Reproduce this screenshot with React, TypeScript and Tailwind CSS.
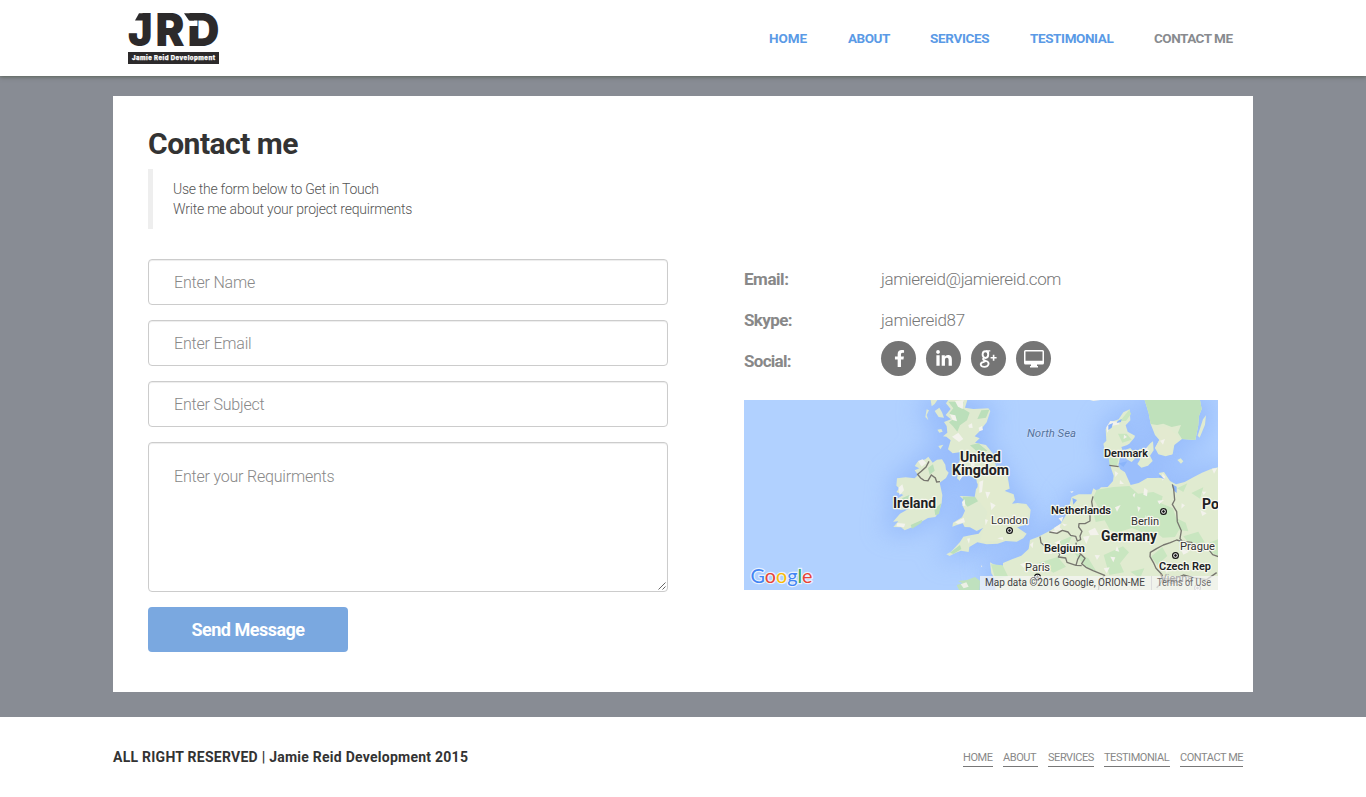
import React from "react";
import { FaFacebookF, FaLinkedinIn } from "react-icons/fa";

const navItems = [
  { label: "HOME", cls: "w-[39px] text-[#5a9ae6] tracking-[-0.05px]" },
  { label: "ABOUT", cls: "w-[42px] text-[#5a9ae6] tracking-[-0.5px]" },
  { label: "SERVICES", cls: "w-[60px] text-[#5a9ae6] tracking-[-0.33px]" },
  { label: "TESTIMONIAL", cls: "w-[84px] text-[#5a9ae6] tracking-[-0.39px]" },
  { label: "CONTACT ME", cls: "w-[79px] text-[#888b8f] tracking-[-0.5px]" },
];

const footerItems = [
  { label: "HOME", cls: "w-[30px]" },
  { label: "ABOUT", cls: "w-[35px]" },
  { label: "SERVICES", cls: "w-[46px]" },
  { label: "TESTIMONIAL", cls: "w-[66px]" },
  { label: "CONTACT ME", cls: "w-[63px]" },
];

function Logo() {
  return (
    <svg width="92" height="54" viewBox="0 0 92 54" className="block overflow-visible" fill="#2c2a2b">
      <g fontFamily="Inter, sans-serif" fontWeight="900" fontSize="45">
        <text x="0" y="33" textLength="24.5" lengthAdjust="spacingAndGlyphs">J</text>
        <text x="27.5" y="33" textLength="29" lengthAdjust="spacingAndGlyphs">R</text>
        <text x="59.5" y="33" textLength="32" lengthAdjust="spacingAndGlyphs">D</text>
      </g>
      <polygon points="11,0.3 16,0.3 16,7.5 7,7.5" />
      <rect x="60" y="7.5" width="9.5" height="5.5" fill="#fff" />
      <polygon points="56,0.3 66,0.3 66,7.5 61,7.5" />
      <rect x="0" y="39" width="91" height="12" />
      <text x="4" y="47.2" fill="#fff" stroke="#fff" strokeWidth="0.25" fontFamily="Inter, sans-serif" fontWeight="800" fontSize="6" textLength="83">
        Jamie Reid Development
      </text>
    </svg>
  );
}

function City({ x, y, light = false }: { x: number; y: number; light?: boolean }) {
  return (
    <g stroke={light ? "#999" : "#111"} fill="#fff">
      <circle cx={x} cy={y} r="2.9" strokeWidth="1.2" />
      <circle cx={x} cy={y} r="1" fill={light ? "#999" : "#111"} strokeWidth="0.8" />
    </g>
  );
}

function Label({ x, y, w, children }: { x: number; y: number; w: number; children: string }) {
  return (
    <text x={x} y={y} textLength={w} lengthAdjust="spacingAndGlyphs">
      {children}
    </text>
  );
}

function EuropeMap() {
  return (
    <svg width="474" height="190" viewBox="0 0 474 190" className="block" fontFamily="Roboto, sans-serif">
      <defs>
        <filter id="coast" x="-40%" y="-40%" width="180%" height="180%">
          <feGaussianBlur stdDeviation="36" />
        </filter>
        <clipPath id="frame">
          <rect width="474" height="190" />
        </clipPath>
        <g id="isles">
          <path d="M205 15L262 15L255 38L280 42L325 40L331 48L320 82L296 112L284 124L299 130L285 143L318 150L338 175L348 213L383 245L389 281L373 287L401 298L405 315L396 326L413 324L439 327L452 344L449 370L433 390L409 395L440 416L430 430L410 440L377 438L353 446L320 448L292 442L268 456L266 471L243 467L226 474L209 483L199 478L213 470L240 441L250 425L271 421L296 416L309 399L290 408L270 397L254 396L248 385L231 390L217 395L219 383L246 367L255 347L247 331L258 320L239 303L262 304L284 306L288 282L300 270L291 265L288 247L275 245L263 235L245 241L239 257L231 250L237 225L230 217L245 184L243 171L218 175L204 163L212 136L199 125L189 124L202 113L200 93L192 81L213 73L197 60L212 42L198 25Z" />
          <path d="M104 226L118 220L104 213L113 200L136 193L145 185L158 203L171 194L186 193L196 209L198 224L206 233L198 249L179 263L187 300L185 324L176 352L166 366L144 369L119 383L96 397L74 406L63 397L40 396L55 379L39 380L60 356L85 342L62 345L45 331L49 313L70 300L49 291L58 280L49 272L51 250L77 247L104 250L114 240Z" />
          <path d="M140 43L147 46L140 60L145 76L136 66ZM152 15L172 15L164 27L155 34ZM164 48L178 38L186 52L192 68L176 66ZM172 104L184 102L188 110L178 113ZM175 153L190 149L181 163Z" />
        </g>
        <g id="mainland">
          <path d="M720 215L695 221L666 233L640 247L614 261L588 268L570 258L552 231L536 234L545 248L525 249L502 249L476 264L452 270L443 250L435 232L421 223L415 212L419 192L430 172L424 156L440 151L448 146L463 128L465 122L443 110L437 91L451 76L449 43L430 52L416 73L391 82L377 102L379 137L370 146L374 165L386 188L394 222L401 242L399 258L383 276L363 277L352 288L340 280L334 298L296 298L275 306L269 328L258 360L242 386L210 407L175 425L150 435L146 462L124 482L96 493L69 504L69 515L40 508L30 502L34 535L47 555L45 600L720 600Z" />
          <path d="M494 15L660 15L665 42L657 63L655 90L646 135L606 132L583 150L578 178L557 184L535 178L525 159L538 135L525 120L512 87L506 55Z" />
          <path d="M669 73L678 61L675 89L659 128L653 122ZM592 195L602 190L610 199L603 206ZM434 166L451 159L462 172L464 192L455 201L439 192ZM478 161L494 164L511 145L519 139L521 166L510 182L518 198L504 212L484 218L472 207L480 194Z" />
        </g>
      </defs>
      <g clipPath="url(#frame)">
        <rect width="474" height="190" fill="#b1d1ff" />
        <g filter="url(#coast)" fill="#89b0f9" stroke="#89b0f9" strokeWidth="34" opacity="0.62" transform="translate(136 -5) scale(.33333)">
          <use href="#isles" />
        </g>
        <g filter="url(#coast)" fill="#89b0f9" stroke="#89b0f9" strokeWidth="34" opacity="0.62" transform="translate(236 -5) scale(.33333)">
          <use href="#mainland" />
        </g>
        <g transform="translate(136 -5) scale(.33333)">
          <use href="#isles" fill="#dfead0" />
          <path fill="#e2ebcf" d="M328 175L346 213L383 245L386 280L370 290L400 300L395 328L435 330L448 350L432 389L405 400L433 420L405 435L300 440L310 405L322 350L290 308L295 245Z" />
          <path fill="#bbdfba" d="M205 20L252 20L246 39L269 53L261 76L240 91L232 110L219 94L207 82L225 69L208 55L220 40ZM248 305L285 305L294 319L263 335L250 322ZM304 46L328 44L318 68L292 72ZM144 219L159 208L164 227L149 239ZM65 310L88 300L81 320L66 318ZM270 151L295 145L322 167L299 177ZM210 473L240 450L244 462L220 477ZM92 390L127 374L124 384L96 401ZM163 343L184 324L177 357L166 361Z" />
          <path fill="#f3f3ed" d="M225 18L251 15L248 42L234 35ZM210 58L226 61L231 79L218 75ZM216 125L235 113L250 132L237 141ZM296 98L306 93L309 105L298 109ZM265 90L276 85L278 99L267 98ZM272 198L282 192L284 216L273 213ZM298 260L310 256L306 291L298 294ZM316 290L331 292L322 311ZM331 322L347 331L334 345ZM246 321L254 313L256 332L248 332ZM225 382L251 368L255 382L234 387ZM315 373L324 375L317 391ZM114 198L128 193L139 204L125 215ZM55 278L67 268L72 286L59 301ZM52 384L76 386L72 397L49 394ZM261 431L270 430L267 446ZM380 382L396 385L390 394ZM352 430L368 426L370 435ZM238 257L244 235L250 241Z" />
          <path fill="none" stroke="#77766f" strokeWidth="4.2" d="M147 199L138 216L124 229L113 238L122 249L132 256L144 257L154 240L166 249L170 261L180 260" />
          <path fill="#bfe1be" d="M230 570L248 565L234 558L261 555L285 546L300 557L298 600L244 600Z" />
          <path fill="#eef0e7" d="M242 568L259 562L266 575L251 580ZM303 511L307 514L304 517Z" />
        </g>
        <g transform="translate(236 -5) scale(.33333)">
          <use href="#mainland" fill="#e0ebd0" />
          <path fill="#c9e6c0" d="M350 284L400 276L448 273L474 296L520 291L548 304L543 325L579 340L599 401L585 426L548 428L528 412L498 416L456 399L414 412L390 405L374 376L347 381L340 354L354 335L339 309ZM371 480L429 454L447 472L420 505L432 532L388 540ZM33 508L68 511L84 544L46 553ZM590 370L617 383L625 409L596 405ZM610 424L655 410L677 447L719 431L720 485L681 466L636 456ZM280 470L325 490L350 530L316 515ZM451 530L493 520L480 550ZM591 280L622 265L610 291ZM634 294L670 277L660 311ZM386 187L416 190L411 212L389 210ZM414 116L440 116L455 134L427 143ZM420 78L448 44L453 57L438 78ZM225 445L277 422L261 455ZM176 503L233 486L258 515L220 533ZM513 485L547 456L562 483L532 510Z" />
          <path fill="#bfe1bb" d="M494 15L660 15L665 42L657 63L655 90L646 135L606 132L594 113L603 90L575 96L550 86L531 90L512 87L506 55Z" />
          <path fill="#e3ead0" d="M534 99L559 93L580 110L599 131L578 153L574 180L545 178L525 159L538 135Z" />
          <path fill="#f3f2ec" d="M379 97L391 78L414 80L419 88L391 94L382 114ZM493 278L503 286L501 304L490 299ZM458 300L466 293L463 308ZM405 337L422 330L411 350ZM472 334L482 338L475 351ZM547 235L557 246L547 257ZM532 317L552 315L538 328ZM325 408L345 398L357 420L331 421ZM309 425L329 422L319 447ZM284 350L300 355L291 363ZM411 453L418 470L406 467ZM391 485L406 487L400 502ZM344 480L360 481L351 495ZM371 520L389 517L380 535ZM605 325L615 331L604 341ZM696 221L712 219L702 236ZM666 290L679 290L671 300ZM598 453L626 471L610 479ZM497 360L504 377L493 388ZM550 520L568 515L561 535ZM192 475L210 466L217 477ZM120 508L139 502L132 519ZM540 137L555 132L549 149ZM490 166L503 157L502 171ZM432 119L441 126L431 132ZM404 228L415 235L406 246ZM420 255L432 267L419 267ZM245 385L262 389L253 394ZM223 443L242 434L237 450ZM150 449L160 440L158 460ZM661 345L680 355L667 363Z" />
          <path fill="#8ab4fa" d="M385 90L399 84L395 98L385 105ZM413 78L425 72L423 81L410 84ZM277 309L291 315L280 329ZM540 239L553 253L537 246ZM576 268L590 275L590 294L580 286ZM416 205L442 199L430 216Z" />
          <path fill="#f2f3ed" d="M222 399L242 386L239 398L249 405L224 407ZM210 407L236 408L223 415ZM236 370L250 365L245 381ZM270 290L281 288L276 294ZM330 15L362 15L340 18Z" />
          <g fill="none" stroke="#77766f" strokeWidth="4" strokeLinejoin="round">
            <path d="M388 211L416 215M339 304L335 320L338 339L330 350L330 378L315 386L297 386L296 396L306 409L300 423L302 434L292 438L287 424L272 421L264 411L247 406L231 415L208 411M180 425L183 443L198 456L225 465L240 477L235 486L257 489L261 502L288 511L293 493L302 477L290 464L288 443M302 477L315 490L305 506L318 517L339 527L374 541L358 560L355 590M288 511L305 512M577 268L581 282L584 315L577 328L590 350L592 380L604 407L600 431L608 440L590 435L571 443L550 450L531 460L511 472L510 485L522 506L528 520L545 538L550 549L538 570L530 578M600 438L634 442L655 463L670 466L684 461L698 479L716 485M550 550L580 554L610 540L640 548L680 554L710 533M550 553L575 565L605 557" />
          </g>
        </g>
        <g fill="#202124" stroke="#f7f8ef" strokeWidth="2.4" strokeLinejoin="round" paintOrder="stroke" fontWeight="700">
          <g fontSize="14">
            <Label x={216} y={62} w={41}>United</Label>
            <Label x={208} y={75} w={57}>Kingdom</Label>
            <Label x={149} y={108} w={43}>Ireland</Label>
            <Label x={357} y={141} w={56}>Germany</Label>
            <text x="458" y="109">Po</text>
          </g>
          <g fontSize="11.5" fontWeight="600">
            <Label x={360} y={57} w={44}>Denmark</Label>
            <Label x={307} y={114} w={60}>Netherlands</Label>
            <Label x={300} y={152} w={41}>Belgium</Label>
            <Label x={415} y={170} w={52}>Czech Rep</Label>
          </g>
          <g fontSize="11.5" fontWeight="400" fill="#333">
            <Label x={247} y={124} w={37}>London</Label>
            <Label x={387} y={125} w={28}>Berlin</Label>
            <Label x={436} y={150} w={35}>Prague</Label>
            <Label x={281} y={171} w={25}>Paris</Label>
          </g>
        </g>
        <text x="283" y="37" fontSize="11.5" fontStyle="italic" fill="#53739f" stroke="#c5dafc" strokeWidth="1.5" paintOrder="stroke" textLength="49" lengthAdjust="spacingAndGlyphs">North Sea</text>
        <City x={265.5} y={130.5} />
        <City x={419.5} y={111.5} />
        <City x={431.5} y={155.5} />
        <City x={293.5} y={177} />
        <City x={453.5} y={188} light />
        <rect x="236" y="176" width="238" height="14" fill="#f5f5f5" opacity="0.72" />
        <path d="M407.5 176V190" stroke="#ddd" />
        <text x="416" y="182" fontSize="11.5" fill="#aaa" textLength="33" lengthAdjust="spacingAndGlyphs">Vienna</text>
        <text x="241" y="186" fontSize="10" fill="#444" textLength="160">Map data ©2016 Google, ORION-ME</text>
        <text x="413" y="186" fontSize="10" fill="#707070" textLength="54" lengthAdjust="spacingAndGlyphs">Terms of Use</text>
        <text x="6.5" y="182.5" fontFamily="Lato, sans-serif" fontSize="20" fontWeight="400" textLength="62" lengthAdjust="spacingAndGlyphs" stroke="#e9f1fd" strokeWidth="2.4" paintOrder="stroke">
          <tspan fill="#4285f4">G</tspan><tspan fill="#ea4335">o</tspan><tspan fill="#fbbc05">o</tspan><tspan fill="#4285f4">g</tspan><tspan fill="#34a853">l</tspan><tspan fill="#ea4335">e</tspan>
        </text>
      </g>
    </svg>
  );
}

function Social() {
  const circle = "flex size-[35px] items-center justify-center rounded-full bg-[#757575] text-white";
  return (
    <div className="flex gap-[10px]">
      <a className={circle}><FaFacebookF size={17} className="ml-0.5" /></a>
      <a className={circle}><FaLinkedinIn size={18} /></a>
      <a className={circle}>
        <svg width="20" height="20" viewBox="0 0 20 20" fill="none" stroke="#fff">
          <ellipse cx="6.4" cy="5.6" rx="2.8" ry="3.4" strokeWidth="1.9" />
          <path d="M7 1.9H11.3M9 2.6L9.8 4.4" strokeWidth="1.3" />
          <path d="M5 8.8C2.8 10.7 5 11.2 7.2 12C11.5 13.6 9.4 17.8 5.6 17.8C1 17.8 .6 14.2 4 13.2C4.9 12.9 5.8 12.7 6.6 12.3" strokeWidth="1.8" />
          <path d="M14.6 5.7V11.7M11.6 8.7H17.6" strokeWidth="1.6" />
        </svg>
      </a>
      <a className={circle}>
        <svg width="20" height="18" viewBox="0 0 20 18">
          <path fill="#fff" fillRule="evenodd" d="M1.5 0H18.5Q20 0 20 1.5V13Q20 14.5 18.5 14.5H13V16H14V17.5H6V16H7V14.5H1.5Q0 14.5 0 13V1.5Q0 0 1.5 0ZM1.5 1.5V10.8H18.5V1.5Z" />
        </svg>
      </a>
    </div>
  );
}

const field =
  "block w-full resize-none rounded-[4px] border border-[#ccc] bg-white px-[25px] text-base font-light tracking-[-0.2px] shadow-[inset_0_1px_1px_rgba(0,0,0,0.075)] outline-none placeholder:text-[#888] placeholder:opacity-100";

export default function App() {
  return (
    <div className="flex h-[797px] w-[1366px] flex-col overflow-hidden bg-[#888c94] font-['Roboto',sans-serif]">
      <header className="z-10 h-[76px] shrink-0 bg-white px-[113px] shadow-[0_1px_4px_rgba(60,70,50,0.6)]">
        <div className="flex justify-between pr-5 pl-[15px]">
          <div className="pt-[12.5px]"><Logo /></div>
          <nav className="flex gap-10 pt-7 text-[13.5px] leading-5 font-bold">
            {navItems.map((n) => (
              <a key={n.label} className={`whitespace-nowrap ${n.cls}`}>{n.label}</a>
            ))}
          </nav>
        </div>
      </header>

      <main className="mx-[113px] mt-5 h-[596px] shrink-0 bg-white px-[35px] pt-[31px]">
        <h1 className="h-[42px] text-[30px] leading-[34px] font-bold tracking-[-0.5px] text-[#333]">Contact me</h1>
        <blockquote className="h-[60px] border-l-[5px] border-[#eee] py-[10px] pl-5 text-sm leading-5 font-light text-[#555]">
          <p className="tracking-[-0.28px]">Use the form below to Get in Touch</p>
          <p className="tracking-[-0.21px]">Write me about your project requirments</p>
        </blockquote>

        <div className="mt-[30px] flex">
          <form className="flex w-[520px] flex-col gap-[15px]">
            <input className={`${field} h-[46px]`} placeholder="Enter Name" />
            <input className={`${field} h-[46px]`} placeholder="Enter Email" />
            <input className={`${field} h-[46px]`} placeholder="Enter Subject" />
            <div className="relative">
              <textarea className={`${field} h-[150px] pt-[22px]`} placeholder="Enter your Requirments" />
              <svg width="8" height="8" viewBox="0 0 8 8" className="absolute right-[2px] bottom-[2px]" stroke="#555" strokeWidth="0.9">
                <path d="M0.5 7.5L7.5 0.5M4.5 7.5L7.5 4.5" />
              </svg>
            </div>
            <button type="button" className="h-[45px] w-[200px] rounded-[4px] bg-[#7aa8e0] text-lg font-bold tracking-[-0.5px] text-white">
              Send Message
            </button>
          </form>

          <section className="ml-[76px] w-[474px] text-[17px] text-[#888]">
            <dl className="flex h-[141px] flex-col">
              <div className="flex h-[41px] items-center">
                <dt className="w-[137px] font-bold tracking-[-0.45px]">Email:</dt>
                <dd className="font-light text-[#777] tracking-[-0.42px]">jamiereid@jamiereid.com</dd>
              </div>
              <div className="flex h-[41px] items-center">
                <dt className="w-[137px] font-bold tracking-[-0.6px]">Skype:</dt>
                <dd className="font-light text-[#777] tracking-[-0.3px]">jamiereid87</dd>
              </div>
              <div className="flex h-[41px]">
                <dt className="w-[137px] font-bold leading-[41px] tracking-[-0.7px]">Social:</dt>
                <dd><Social /></dd>
              </div>
            </dl>
            <EuropeMap />
          </section>
        </div>
      </main>

      <footer className="mt-[25px] flex h-20 shrink-0 items-start justify-between bg-white pr-[123px] pl-[113px]">
        <p className="mt-[30px] text-sm leading-5 font-bold tracking-[0.25px] whitespace-nowrap text-[#333]">
          ALL RIGHT RESERVED | Jamie Reid Development 2015
        </p>
        <nav className="mt-8 flex gap-[10px] text-[11px] leading-[17px] tracking-[-0.45px] text-[#888]">
          {footerItems.map((n) => (
            <a key={n.label} className={`h-[18px] border-b border-[#777] whitespace-nowrap ${n.cls}`}>{n.label}</a>
          ))}
        </nav>
      </footer>
    </div>
  );
}
